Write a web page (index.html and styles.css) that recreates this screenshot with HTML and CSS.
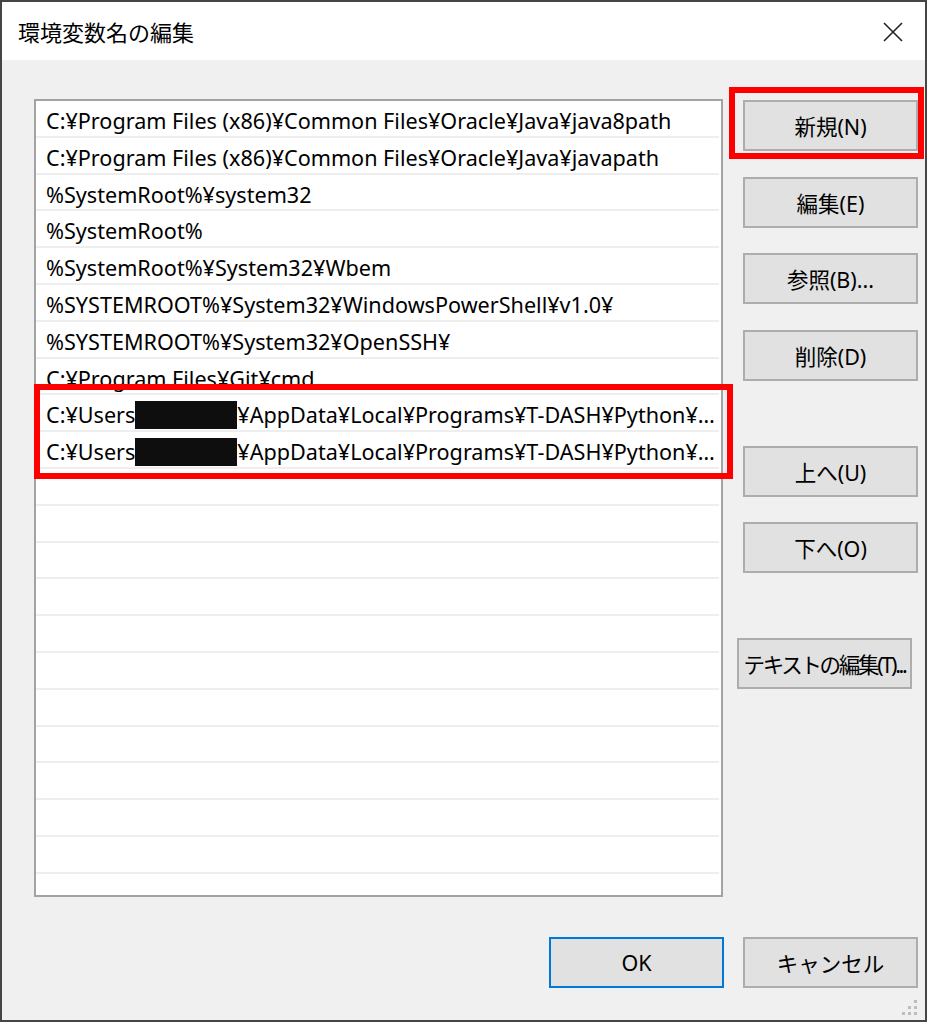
FILE: index.html
```html
<!DOCTYPE html>
<html lang="ja">
<head>
<meta charset="utf-8">
<title>環境変数名の編集</title>
<link rel="stylesheet" href="styles.css">
</head>
<body>
<div class="window">
  <div class="titlebar">
    <span class="title">環境変数名の編集</span>
    <svg class="close" width="20" height="20" viewBox="0 0 20 20"><path d="M1 1 L19 19 M19 1 L1 19" stroke="#222" stroke-width="1.6" fill="none"/></svg>
  </div>
  <div class="dialog">
    <div class="content">
      <div class="list">
        <div class="row">C:¥Program Files (x86)¥Common Files¥Oracle¥Java¥java8path</div>
        <div class="row">C:¥Program Files (x86)¥Common Files¥Oracle¥Java¥javapath</div>
        <div class="row">%SystemRoot%¥system32</div>
        <div class="row">%SystemRoot%</div>
        <div class="row">%SystemRoot%¥System32¥Wbem</div>
        <div class="row">%SYSTEMROOT%¥System32¥WindowsPowerShell¥v1.0¥</div>
        <div class="row">%SYSTEMROOT%¥System32¥OpenSSH¥</div>
        <div class="row">C:¥Program Files¥Git¥cmd</div>
        <div class="row">C:¥Users<span class="redact"></span>¥AppData¥Local¥Programs¥T-DASH¥Python¥…</div>
        <div class="row">C:¥Users<span class="redact"></span>¥AppData¥Local¥Programs¥T-DASH¥Python¥…</div>
        <div class="row"></div>
        <div class="row"></div>
        <div class="row"></div>
        <div class="row"></div>
        <div class="row"></div>
        <div class="row"></div>
        <div class="row"></div>
        <div class="row"></div>
        <div class="row"></div>
        <div class="row"></div>
        <div class="row"></div>
        <div class="row"></div>
      </div>
      <div class="buttons">
        <button class="btn">新規(N)</button>
        <button class="btn">編集(E)</button>
        <button class="btn">参照(B)...</button>
        <button class="btn">削除(D)</button>
        <button class="btn spaced">上へ(U)</button>
        <button class="btn">下へ(O)</button>
        <button class="btn spaced shifted">テキストの編集(T)...</button>
      </div>
    </div>
    <div class="footer">
      <button class="btn default">OK</button>
      <button class="btn">キャンセル</button>
    </div>
  </div>
  <svg class="grip" width="18" height="18" viewBox="0 0 18 18">
    <rect x="12" y="0" width="3" height="3" fill="#bdbdbd"/>
    <rect x="6" y="6" width="3" height="3" fill="#bdbdbd"/>
    <rect x="12" y="6" width="3" height="3" fill="#bdbdbd"/>
    <rect x="0" y="12" width="3" height="3" fill="#bdbdbd"/>
    <rect x="6" y="12" width="3" height="3" fill="#bdbdbd"/>
    <rect x="12" y="12" width="3" height="3" fill="#bdbdbd"/>
  </svg>
  <div class="highlight hl-new"></div>
  <div class="highlight hl-rows"></div>
</div>
</body>
</html>
```

FILE: styles.css
```css
html, body {
  margin: 0;
  padding: 0;
  background: #ffffff;
}

body {
  font-family: "Noto Sans", "Noto Sans CJK JP", sans-serif;
  color: #000;
}

.window {
  position: relative;
  width: 927px;
  height: 1022px;
  box-sizing: border-box;
  border: 2px solid #454545;
  display: flex;
  flex-direction: column;
  background: #f0f0f0;
}

.titlebar {
  height: 58px;
  flex: 0 0 58px;
  background: #ffffff;
  display: flex;
  align-items: center;
  justify-content: space-between;
  padding: 0 22px 0 16px;
}

.title {
  font-size: 22px;
  color: #000;
}

.close {
  display: block;
  margin-top: 1px;
}

.dialog {
  flex: 1;
  display: flex;
  flex-direction: column;
  padding: 39px 7px 0 32px;
}

.content {
  display: grid;
  grid-template-columns: 689px 175px;
  column-gap: 20px;
  height: 798px;
}

.list {
  box-sizing: border-box;
  height: 798px;
  border: 2px solid #a3a3a3;
  background: #ffffff;
  overflow: hidden;
}

.row {
  box-sizing: border-box;
  height: 36.8px;
  line-height: 30px;
  padding-top: 5px;
  border-bottom: 2px solid #eeeeee;
  margin-right: 2px;
  padding-left: 10px;
  font-size: 21.6px;
  white-space: nowrap;
}

.redact {
  display: inline-block;
  width: 102px;
  height: 28px;
  background: #0e0e0e;
  vertical-align: -6px;
}

.buttons {
  display: flex;
  flex-direction: column;
  gap: 25.5px;
  padding-top: 1px;
}

.btn {
  box-sizing: border-box;
  width: 175px;
  height: 51px;
  flex: none;
  border: 2px solid #adadad;
  background: #e1e1e1;
  font-family: "Noto Sans", "Noto Sans CJK JP", sans-serif;
  font-size: 21.5px;
  color: #000;
  padding: 0;
  white-space: nowrap;
}

.btn.spaced {
  margin-top: 39.5px;
}

.btn.shifted {
  margin-left: -6px;
  letter-spacing: -2.3px;
}

.btn.default {
  border-color: #0078d7;
}

.footer {
  display: flex;
  justify-content: flex-end;
  gap: 19px;
  margin-top: 40px;
}

.grip {
  position: absolute;
  right: 5px;
  bottom: 2px;
}

.highlight {
  position: absolute;
  box-sizing: border-box;
  border: 6px solid #ff0000;
}

.hl-new {
  left: 727px;
  top: 85px;
  width: 195px;
  height: 72px;
}

.hl-rows {
  left: 32px;
  top: 382px;
  width: 699px;
  height: 95px;
}
```
